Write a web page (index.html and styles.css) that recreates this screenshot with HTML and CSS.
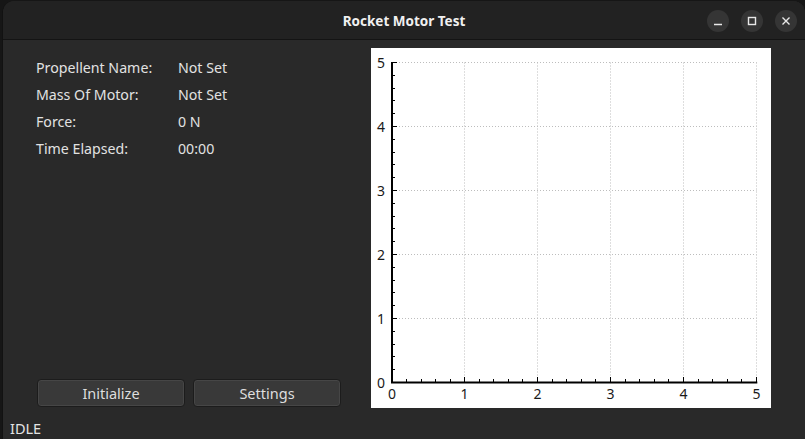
FILE: index.html
```html
<!DOCTYPE html>
<html>
<head>
<meta charset="utf-8">
<link rel="stylesheet" href="styles.css">
</head>
<body>
<div class="window">
  <div class="titlebar">
    <div class="spacer"></div>
    <div class="title">Rocket Motor Test</div>
    <div class="controls">
      <div class="ctl"><svg width="22" height="22" viewBox="0 0 22 22"><path d="M7 14.5 H15" /></svg></div>
      <div class="ctl"><svg width="22" height="22" viewBox="0 0 22 22"><rect x="7.5" y="7.5" width="7" height="7" /></svg></div>
      <div class="ctl"><svg width="22" height="22" viewBox="0 0 22 22"><path d="M7.5 7.5 L14.5 14.5 M14.5 7.5 L7.5 14.5" /></svg></div>
    </div>
  </div>
  <div class="content">
    <div class="left">
      <div class="info">
        <div class="lbl">Propellent Name:</div><div class="val">Not Set</div>
        <div class="lbl">Mass Of Motor:</div><div class="val">Not Set</div>
        <div class="lbl">Force:</div><div class="val">0 N</div>
        <div class="lbl">Time Elapsed:</div><div class="val">00:00</div>
      </div>
      <div class="buttons">
        <button class="btn">Initialize</button>
        <button class="btn">Settings</button>
      </div>
    </div>
    <div class="chart">
      <svg width="400" height="360" viewBox="0 0 400 360">
        <g class="grid">
          <path d="M22 14.5 H385.5 M22 78.5 H385.5 M22 142.5 H385.5 M22 206.5 H385.5 M22 270.5 H385.5" />
          <path d="M93.5 14.5 V334 M166.5 14.5 V334 M239.5 14.5 V334 M312.5 14.5 V334 M385.5 14.5 V334" />
        </g>
        <g class="ticks">
          <path d="M21 14.5 h5 M21 78.5 h5 M21 142.5 h5 M21 206.5 h5 M21 270.5 h5" />
          <path d="M21 27.5 h3 M21 40.5 h3 M21 52.5 h3 M21 65.5 h3 M21 91.5 h3 M21 104.5 h3 M21 116.5 h3 M21 129.5 h3 M21 155.5 h3 M21 168.5 h3 M21 180.5 h3 M21 193.5 h3 M21 219.5 h3 M21 232.5 h3 M21 244.5 h3 M21 257.5 h3 M21 283.5 h3 M21 296.5 h3 M21 308.5 h3 M21 321.5 h3" />
          <path d="M93.5 334 v-5 M166.5 334 v-5 M239.5 334 v-5 M312.5 334 v-5 M385.5 334 v-5" />
          <path d="M35.5 334 v-3 M50.5 334 v-3 M64.5 334 v-3 M79.5 334 v-3 M108.5 334 v-3 M122.5 334 v-3 M137.5 334 v-3 M151.5 334 v-3 M181.5 334 v-3 M195.5 334 v-3 M210.5 334 v-3 M224.5 334 v-3 M254.5 334 v-3 M268.5 334 v-3 M283.5 334 v-3 M297.5 334 v-3 M327.5 334 v-3 M341.5 334 v-3 M356.5 334 v-3 M370.5 334 v-3" />
        </g>
        <path class="axis" d="M21 14 V334.5 H386.3" />
        <g class="ylab">
          <text x="14" y="20">5</text>
          <text x="14" y="84">4</text>
          <text x="14" y="148">3</text>
          <text x="14" y="212">2</text>
          <text x="14" y="276">1</text>
          <text x="14" y="340">0</text>
        </g>
        <g class="xlab">
          <text x="21" y="351">0</text>
          <text x="93.5" y="351">1</text>
          <text x="166.5" y="351">2</text>
          <text x="239.5" y="351">3</text>
          <text x="312.5" y="351">4</text>
          <text x="385.5" y="351">5</text>
        </g>
      </svg>
    </div>
  </div>
  <div class="status">IDLE</div>
</div>
</body>
</html>
```
FILE: styles.css
```css
html, body {
  margin: 0;
  padding: 0;
  background: #161616;
  width: 805px;
  height: 439px;
  overflow: hidden;
}
.window {
  margin: 1px 0 0 2px;
  width: 802px;
  height: 438px;
  background: #292929;
  border-left: 1px solid #121212;
  border-radius: 12px 12px 0 0;
  overflow: hidden;
  font-family: "Noto Sans", "Open Sans", sans-serif;
  color: #e4e4e4;
}
.titlebar {
  height: 38px;
  background: #222222;
  border-bottom: 1px solid #141414;
  display: grid;
  grid-template-columns: 1fr auto 1fr;
  align-items: center;
}
.title {
  font-weight: bold;
  font-size: 13.5px;
  color: #f0f0f0;
  padding-top: 1px;
}
.controls {
  display: flex;
  justify-content: flex-end;
  gap: 12px;
  padding-right: 8px;
  padding-top: 1px;
}
.ctl {
  width: 22px;
  height: 22px;
  border-radius: 50%;
  background: #353535;
}
.ctl svg {
  display: block;
  fill: none;
  stroke: #e8e8e8;
  stroke-width: 1.4;
}
.content {
  height: 360px;
  padding: 8px 34px 10px 33px;
  display: flex;
}
.left {
  width: 305px;
  margin-right: 30px;
  display: flex;
  flex-direction: column;
  justify-content: space-between;
}
.info {
  margin-top: 6px;
  display: grid;
  grid-template-columns: 142px auto;
  grid-auto-rows: 27px;
  align-items: center;
  font-size: 14.2px;
  color: #e2e2e2;
}
.buttons {
  display: flex;
  gap: 8px;
  margin-bottom: 1px;
  padding-left: 1px;
}
.btn {
  width: 148px;
  height: 28px;
  margin: 0;
  padding: 0;
  background: #393939;
  border: 1px solid #1c1c1c;
  box-shadow: inset 0 0 0 1px #464646;
  border-radius: 4px;
  color: #dedede;
  font-family: "Noto Sans", "Open Sans", sans-serif;
  font-size: 14.5px;
}
.chart {
  width: 400px;
  height: 360px;
  background: #ffffff;
}
.chart svg {
  display: block;
}
.grid path {
  fill: none;
  stroke: #bdbdbd;
  stroke-width: 1;
  stroke-dasharray: 1 2;
}
.ticks path {
  fill: none;
  stroke: #000000;
  stroke-width: 1;
}
.axis {
  fill: none;
  stroke: #000000;
  stroke-width: 2;
}
.ylab text, .xlab text {
  font-family: "Noto Sans", "Open Sans", sans-serif;
  font-size: 14px;
  fill: #1a1a1a;
}
.ylab text {
  text-anchor: end;
}
.xlab text {
  text-anchor: middle;
}
.status {
  height: 21px;
  line-height: 21px;
  padding-left: 7px;
  font-size: 14.5px;
  color: #e4e4e4;
}
```
